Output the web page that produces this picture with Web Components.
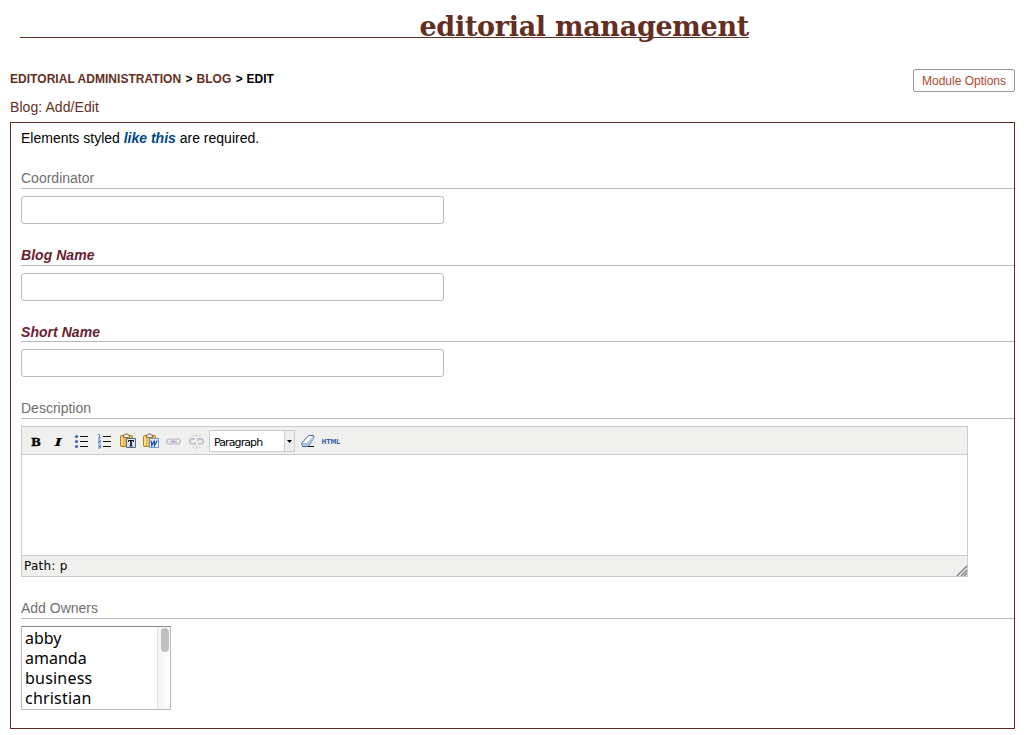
<!DOCTYPE html>
<html lang="en">
<head>
<meta charset="utf-8">
<title>Editorial management</title>
<style>
body{margin:0;background:#fff;color:#000;font-family:"Liberation Sans",Arial,sans-serif}
</style>
</head>
<body>
<blog-page></blog-page>
<script>
const define = (name, html, setup) => customElements.define(name, class extends HTMLElement {
  constructor() {
    super();
    const t = document.createElement('template');
    t.innerHTML = html;
    this.attachShadow({mode: 'open'}).append(t.content.cloneNode(true));
  }
  connectedCallback() { if (setup) setup(this, this.shadowRoot); }
});

define('page-banner', `
<style>
:host{display:block;box-sizing:border-box;width:729px;height:38px;margin-left:20px;border-bottom:1px solid #5c2c20;
 font:bold 27px/38px "DejaVu Serif",serif;color:#642f22;text-align:right;white-space:nowrap}
span{display:inline-block;position:relative;top:8px;letter-spacing:-.3px;margin-right:0}
</style><span><slot></slot></span>`);

define('bread-crumbs', `
<style>
:host{display:block;font:bold 12px/14px "Liberation Sans",Arial,sans-serif;white-space:nowrap}
a{color:#642f22;letter-spacing:.04px}
b{margin:0 .6px 0 1px}
</style><a>EDITORIAL ADMINISTRATION</a> <b>&gt;</b> <a>BLOG</a> <b>&gt;</b> <span>EDIT</span>`);

define('option-button', `
<style>
:host{display:block;box-sizing:border-box;width:102px;height:23px;border:1px solid #999;border-radius:2px;
 color:#ae472f;font-size:12px;line-height:22px;text-align:center;white-space:nowrap}
</style><slot></slot>`);

define('form-field', `
<style>
:host{display:block;font-size:14px}
.label{box-sizing:border-box;height:22px;padding-top:var(--label-top,3px);line-height:16px;color:#707070;border-bottom:1px solid #b9b9b9;margin-bottom:7px}
:host([required]) .label{font-weight:bold;font-style:italic;color:#6a2031;letter-spacing:.04px}
</style><div class="label"><span></span></div><slot></slot>`,
(h, r) => { r.querySelector('span').textContent = h.getAttribute('label'); });

define('text-input', `
<style>
:host{display:block;box-sizing:border-box;width:423px;height:28px;border:1px solid #bbb;border-radius:3px;background:#fff}
</style>`);

const clipboard = `<path d="M1.500 2.500h10q1 0 1 1v9q0 1-1 1h-10q-1 0-1-1v-9q0-1 1-1z" fill="#f4bd45" stroke="#b07d22"/><path d="M2 4v8" stroke="#ffeab0" stroke-width="1.500"/><path d="M3.500 2h1.500V1h3v1h1.500v2.500h-6z" fill="#f4f0e4" stroke="#6e5f45" stroke-width=".8"/>`;
const lines = `<path d="M6 3.500h8M6 8.500h8M6 13.500h8" stroke="#111"/>`;
const icons = {
  bold: `<text x="3" y="12.500" textLength="10" lengthAdjust="spacingAndGlyphs" font-family="DejaVu Serif" font-weight="bold" font-size="11.500" stroke="#000" stroke-width=".3">B</text>`,
  italic: `<text x="3.500" y="12.500" textLength="7.500" lengthAdjust="spacingAndGlyphs" font-family="DejaVu Serif" font-weight="bold" font-style="italic" font-size="11.500">I</text>`,
  bullets: lines + `<g fill="#4268b4"><circle cx="2.500" cy="3.500" r="1.600"/><circle cx="2.500" cy="8.500" r="1.600"/><circle cx="2.500" cy="13.500" r="1.600"/></g>`,
  numbers: lines + `<path d="M1 1.500h1.500V5M1 5h3M1 7h2.500v1.500H1.500V10H4M1 12h2.500v3H1M1.500 13.500h2" fill="none" stroke="#5a80cc"/>`,
  text: clipboard + `<path d="M6.500 5.500h9v9h-9z" fill="#dce5f3" stroke="#52698d"/><path d="M8.500 9V7.500h5V9M9.500 13h3" fill="none" stroke="#111"/><path d="M11 7v6" stroke="#111" stroke-width="1.700"/>`,
  word: clipboard + `<path d="M6.500 5.500h9v9h-9z" fill="#eaf1fc" stroke="#6d98d8"/><path d="M8 7.500l.8 5 2.500-5 .2 5 2.800-5" fill="none" stroke="#2458b5" stroke-width="1.400"/>`,
  link: `<g fill="none" stroke="#c4c8d4" stroke-width="1.700"><rect x=".8" y="6" width="6.800" height="4.800" rx="2.300"/><rect x="7.400" y="6" width="6.800" height="4.800" rx="2.300"/></g><path d="M4 8.500h7" stroke="#a9afc0" stroke-width="1.300"/>`,
  unlink: `<g fill="none" stroke="#c1c5d1" stroke-width="1.800"><path d="M6 6H3.200a2.400 2.400 0 0 0 0 4.800H6V9M9 8V6h2.800a2.400 2.400 0 0 1 0 4.800H9"/></g><path d="M7.500 1v3M3 1.500l2.500 2.500M12 1.500l-2.500 2.500M7.500 12.500V16M3 15.500l2.500-2.500M12 15.500l-2.500-2.500" stroke="#c6c7cc"/>`,
  eraser: `<path d="M1.500 10.500l6-7 1.500-1h4.500l.5 2-5 8-1.500 1h-5z" fill="#fff" stroke="#456394"/><path d="M2 11h5l6.500-7v2L8 13H3z" fill="#a9c3e6"/><path d="M1.500 10.500h5.500l6-7" fill="none" stroke="#7892bc" stroke-width=".7"/><path d="M8 13.500h6" stroke="#111"/>`,
  html: `<text x="-1.500" y="11" textLength="18.500" lengthAdjust="spacingAndGlyphs" font-family="DejaVu Sans" font-weight="bold" font-size="7" fill="#315fae">HTML</text>`
};
define('tool-icon', `
<style>
:host{display:block;width:16px;height:16px;flex:none}
svg{display:block;overflow:visible}
</style><svg width="16" height="16" viewBox="0 0 16 16"></svg>`,
(h, r) => { r.querySelector('svg').innerHTML = icons[h.getAttribute('name')]; });

define('format-select', `
<style>
:host{display:flex;box-sizing:border-box;width:86px;height:22px;border:1px solid #ccc;background:#fff;
 font:11px/22px "DejaVu Sans",sans-serif;flex:none}
span{flex:1;padding-left:4px;letter-spacing:-.9px;line-height:23px}
i{width:9px;border-left:1px solid #ccc;background:#eee;display:flex;align-items:center;justify-content:center}
</style><span>Paragraph</span><i><svg width="5" height="3"><path d="M0 0h5L2.500 3z"/></svg></i>`);

define('rich-editor', `
<style>
:host{display:flex;flex-direction:column;box-sizing:border-box;width:947px;height:151px;margin-top:1px;border:1px solid #ccc}
.bar{display:flex;align-items:center;background:#f0f0ee;border-bottom:1px solid #ccc;padding:1px 0 0 6px;box-sizing:border-box;height:28px}
.tools{display:grid;grid-template-columns:repeat(8,23px);width:181px}
.end{display:flex;gap:7px;margin-left:5px}
.area{flex:1}
.foot{display:flex;justify-content:space-between;align-items:flex-end;box-sizing:border-box;height:21px;background:#f0f0ee;border-top:1px solid #ccc;font:12px/20px "DejaVu Sans",sans-serif;padding-left:2px}
.foot span{line-height:19px;letter-spacing:.25px}
</style>
<div class="bar"><div class="tools">${['bold','italic','bullets','numbers','text','word','link','unlink'].map(n => `<tool-icon name="${n}"></tool-icon>`).join('')}</div>
<format-select></format-select><div class="end"><tool-icon name="eraser"></tool-icon><tool-icon name="html"></tool-icon></div></div>
<div class="area"></div>
<div class="foot"><span>Path: p</span><svg width="11" height="11"><path d="M1 11L11 1M5 11l6-6M8 11l3-3" stroke="#777" stroke-width="1.300"/></svg></div>`);

define('owner-list', `
<style>
:host{display:flex;box-sizing:border-box;width:150px;height:84px;border:1px solid #b9b9b9;border-top-color:#888;overflow:hidden;
 font:16px/20px "Noto Sans","DejaVu Sans",sans-serif}
.items{flex:1;padding:1px 0 0 3px}
.items div{height:20px}
.items div:nth-child(n+3){letter-spacing:.2px}
.track{width:12px;border-left:1px solid #e2e2e2;background:linear-gradient(90deg,#f3f3f3,#fff);box-sizing:content-box}
.thumb{width:8px;height:24px;margin:1px 0 0 3px;border-radius:4px;background:#c1c1c1}
</style><div class="items"><div>abby</div><div>amanda</div><div>business</div><div>christian</div></div><div class="track"><div class="thumb"></div></div>`);

define('blog-page', `
<style>
:host{display:block;box-sizing:border-box;width:1025px;height:735px;overflow:hidden}
.top{display:flex;justify-content:space-between;margin:31px 10px 0;height:30px}
bread-crumbs{margin-top:3px}
.title{margin:0 10px;height:23px;font-size:14px;line-height:16px;letter-spacing:.07px;color:#642f22}
main{display:flex;flex-direction:column;box-sizing:border-box;height:607px;margin:0 10px;border:1px solid #5c2c20;padding-left:10px}
p{margin:7px 0 21px;height:16px;font-size:14px;line-height:16px}
em{font-weight:bold;color:#00478a}
.s{margin-bottom:20px}.t{margin-bottom:19px}
.low{--label-top:4px}
</style>
<page-banner>editorial management</page-banner>
<div class="top"><bread-crumbs></bread-crumbs><option-button>Module Options</option-button></div>
<div class="title">Blog: Add/Edit</div>
<main>
<p>Elements styled <em>like this</em> are required.</p>
<form-field class="s" label="Coordinator"><text-input></text-input></form-field>
<form-field class="t" label="Blog Name" required><text-input></text-input></form-field>
<form-field class="s low" label="Short Name" required><text-input></text-input></form-field>
<form-field class="s" label="Description"><rich-editor></rich-editor></form-field>
<form-field label="Add Owners"><owner-list></owner-list></form-field>
</main>`);
</script>
</body>
</html>
